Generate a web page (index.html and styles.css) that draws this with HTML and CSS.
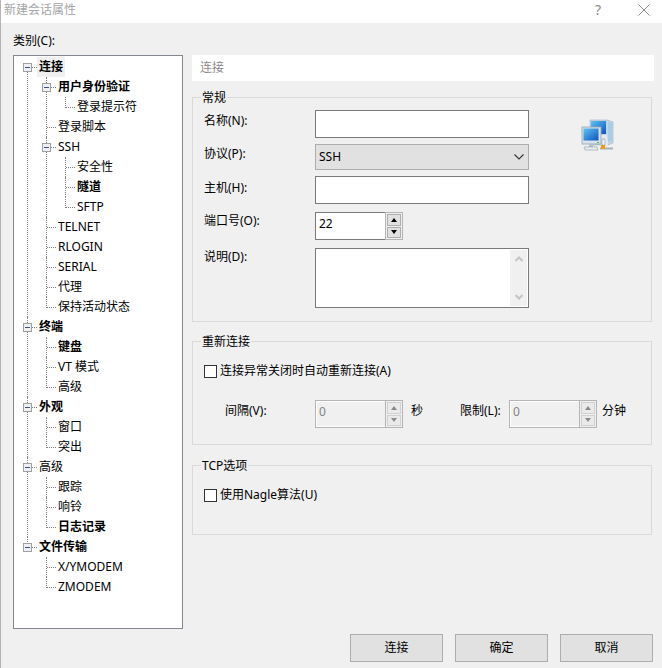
FILE: index.html
```html
<!DOCTYPE html>
<html>
  <head>
    <meta charset="UTF-8" />
    <title>新建会话属性</title>
    <link rel="stylesheet" href="styles.css">
  </head>
  <body>
    <div class="titlebar">
      <span class="title">新建会话属性</span>
      <span class="help">?</span>
      <svg class="close" width="12" height="12" viewBox="0 0 12 12"><path d="M.5.5l11 11M11.500.5l-11 11" stroke="#8a8a8a" fill="none"/></svg>
    </div>

    <div class="main">
      <div class="left">
        <div class="cat-label">类别(C):</div>
        <div class="tree">
          <ul>
            <li class="open"><i class="box"></i><span class="node bold selected">连接</span>
              <ul>
                <li class="open"><i class="box"></i><span class="node bold">用户身份验证</span>
                  <ul><li><span class="node">登录提示符</span></li></ul>
                </li>
                <li><span class="node">登录脚本</span></li>
                <li class="open"><i class="box"></i><span class="node">SSH</span>
                  <ul>
                    <li><span class="node">安全性</span></li>
                    <li><span class="node bold">隧道</span></li>
                    <li><span class="node">SFTP</span></li>
                  </ul>
                </li>
                <li><span class="node">TELNET</span></li>
                <li><span class="node">RLOGIN</span></li>
                <li><span class="node">SERIAL</span></li>
                <li><span class="node">代理</span></li>
                <li><span class="node">保持活动状态</span></li>
              </ul>
            </li>
            <li class="open"><i class="box"></i><span class="node bold">终端</span>
              <ul>
                <li><span class="node bold">键盘</span></li>
                <li><span class="node">VT 模式</span></li>
                <li><span class="node">高级</span></li>
              </ul>
            </li>
            <li class="open"><i class="box"></i><span class="node bold">外观</span>
              <ul>
                <li><span class="node">窗口</span></li>
                <li><span class="node">突出</span></li>
              </ul>
            </li>
            <li class="open"><i class="box"></i><span class="node">高级</span>
              <ul>
                <li><span class="node">跟踪</span></li>
                <li><span class="node">响铃</span></li>
                <li><span class="node bold">日志记录</span></li>
              </ul>
            </li>
            <li class="open"><i class="box"></i><span class="node bold">文件传输</span>
              <ul>
                <li><span class="node">X/YMODEM</span></li>
                <li><span class="node">ZMODEM</span></li>
              </ul>
            </li>
          </ul>
        </div>
      </div>

      <div class="right">
        <div class="page-title">连接</div>

        <fieldset class="group general">
          <legend>常规</legend>
          <div class="form-grid">
            <label class="lbl down">名称(N):</label>
            <div class="field"></div>
            <svg class="pc-icon" width="34" height="36" viewBox="0 0 34 36">
              <defs>
                <linearGradient id="scr" x1="0" y1="0" x2="1" y2="1">
                  <stop offset="0" stop-color="#5cc4f2"/>
                  <stop offset="1" stop-color="#0f52c0"/>
                </linearGradient>
              </defs>
              <path d="M10 2h17l6 2v21l-5 2H10z" fill="#c4d4e2" stroke="#9fb2c4" stroke-width=".6"/>
              <rect x="11" y="3" width="15" height="13" fill="url(#scr)"/>
              <path d="M28 4l4 1v18l-4 1z" fill="#a8cdea"/>
              <path d="M27 17h-6v11h7z" fill="#e4ebf0"/>
              <rect x="2" y="9" width="19" height="17" fill="#d8e2ea" stroke="#92a4b4" stroke-width=".8"/>
              <rect x="3.500" y="10.500" width="15" height="12" fill="url(#scr)"/>
              <rect x="17" y="24" width="2" height="1" fill="#4cc040"/>
              <path d="M9 26h4v3H9z" fill="#b4c0ca"/>
              <path d="M4 29h13l1 3H5z" fill="#e8edf1" stroke="#9aa8b4" stroke-width=".7"/>
              <path d="M20 30.500h13" stroke="#a3b3bf" stroke-width="2"/>
              <path d="M22 21h3v6h-3z" fill="#eef2f5" stroke="#8a98a4" stroke-width=".6"/>
              <rect x="21" y="27" width="4" height="4" fill="#f09a10"/>
            </svg>

            <label class="lbl">协议(P):</label>
            <div class="combo">SSH
              <svg width="10" height="6" viewBox="0 0 10 6"><path d="M.5.500L5 5 9.500.500" fill="none" stroke="#333" stroke-width="1.100"/></svg>
            </div>

            <label class="lbl down2">主机(H):</label>
            <div class="field"></div>

            <label class="lbl up">端口号(O):</label>
            <div class="spin port">
              <div class="spin-text">22</div>
              <div class="spin-btns">
                <span class="spin-btn"><b class="arrow-up"></b></span>
                <span class="spin-btn"><b class="arrow-down"></b></span>
              </div>
            </div>

            <label class="lbl up">说明(D):</label>
            <div class="field memo">
              <div class="memo-bar">
                <svg width="8" height="6" viewBox="0 0 8 6"><path d="M.5 5L4 1.500 7.500 5" fill="none" stroke="#c4c4c4" stroke-width="2"/></svg>
                <svg width="8" height="6" viewBox="0 0 8 6"><path d="M.5 1L4 4.500 7.500 1" fill="none" stroke="#c4c4c4" stroke-width="2"/></svg>
              </div>
            </div>
          </div>
        </fieldset>

        <fieldset class="group reconnect">
          <legend>重新连接</legend>
          <div class="check-row"><i class="check"></i>连接异常关闭时自动重新连接(A)</div>
          <div class="interval-row">
            <span class="int-label">间隔(V):</span>
            <div class="spin disabled">
              <div class="spin-text">0</div>
              <div class="spin-btns">
                <span class="spin-btn"><b class="arrow-up"></b></span>
                <span class="spin-btn"><b class="arrow-down"></b></span>
              </div>
            </div>
            <span class="unit sec">秒</span>
            <span class="limit-label">限制(L):</span>
            <div class="spin disabled">
              <div class="spin-text">0</div>
              <div class="spin-btns">
                <span class="spin-btn"><b class="arrow-up"></b></span>
                <span class="spin-btn"><b class="arrow-down"></b></span>
              </div>
            </div>
            <span class="unit min">分钟</span>
          </div>
        </fieldset>

        <fieldset class="group tcp">
          <legend>TCP选项</legend>
          <div class="check-row"><i class="check"></i>使用Nagle算法(U)</div>
        </fieldset>
      </div>
    </div>

    <div class="buttons">
      <button type="button">连接</button>
      <button type="button">确定</button>
      <button type="button">取消</button>
    </div>
  </body>
</html>
```

FILE: styles.css
```css
* {
  box-sizing: border-box;
}

html, body {
  margin: 0;
  height: 100%;
}

body {
  display: flex;
  flex-direction: column;
  width: 662px;
  height: 668px;
  overflow: hidden;
  background-color: #f0f0f0;
  color: #000;
  font-family: "Noto Sans", "Noto Sans CJK SC", sans-serif;
  font-size: 12px;
  line-height: 20px;
  border-left: 1px solid #b4b4b4;
}

.titlebar {
  flex: none;
  height: 23px;
  background-color: #fff;
  display: flex;
  align-items: center;
  padding: 0 0 3px 3px;
}

.title {
  color: #a6a6a6;
  flex: 1;
}

.help {
  color: #8a8a8a;
  font-size: 14px;
  margin-right: 37px;
}

.close {
  margin-right: 12px;
}

.main {
  display: flex;
  gap: 9px;
  padding: 8px 0 0 12px;
}

.left {
  width: 170px;
}

.cat-label {
  margin-bottom: 4px;
}

.tree {
  height: 574px;
  background-color: #fff;
  border: 1px solid #828790;
  padding: 1px 0 0 13px;
}

.tree ul {
  list-style: none;
  margin: 0;
  padding: 0;
}

.tree li ul {
  padding-left: 19px;
}

.tree li {
  position: relative;
}

.tree li::before {
  content: "";
  position: absolute;
  left: 0;
  top: 0;
  bottom: 0;
  border-left: 1px dotted #808080;
}

.tree li:last-child::before {
  bottom: auto;
  height: 11px;
}

.tree > ul > li:first-child::before {
  top: 10px;
}

.tree li::after {
  content: "";
  position: absolute;
  left: 1px;
  top: 10px;
  width: 9px;
  border-top: 1px dotted #808080;
}

.box {
  position: absolute;
  z-index: 1;
  left: -4px;
  top: 6px;
  width: 9px;
  height: 9px;
  background-color: #eef0f4;
  border: 1px solid #a0a0a0;
}

.box::after {
  content: "";
  position: absolute;
  left: 1px;
  top: 3px;
  width: 5px;
  height: 1px;
  background-color: #3d4f86;
}

.node {
  display: inline-block;
  height: 20px;
  margin-left: 10px;
  padding: 0 2px;
  vertical-align: top;
  color: #000;
}

.bold {
  font-weight: 700;
}

.selected {
  background-color: #f0f0f0;
}

.right {
  width: 462px;
  padding-top: 24px;
}

.page-title {
  height: 26px;
  line-height: 25px;
  background-color: #fff;
  color: #8c8c8c;
  padding-left: 8px;
  margin-bottom: 7px;
}

.group {
  width: 460px;
  margin: 0;
  min-width: 0;
  border: 1px solid #d9d9d9;
  padding: 0 0 0 11px;
}

.group legend {
  margin-left: -3px;
  padding: 2px 1px 0;
  line-height: 16px;
}

.general {
  padding-top: 4px;
  padding-bottom: 13px;
}

.reconnect {
  margin-top: 10px;
  padding-top: 11px;
  padding-bottom: 16px;
}

.tcp {
  margin-top: 11px;
  padding-top: 11px;
  padding-bottom: 29px;
}

.form-grid {
  display: grid;
  grid-template-columns: 111px 214px 1fr;
  grid-template-rows: 34px 32px 36px 36px 60px;
  align-items: start;
}

.lbl {
  grid-column: 1;
}

.lbl.down {
  margin-top: 1px;
}

.lbl.down2 {
  margin-top: 2px;
}

.lbl.up {
  margin-top: -1px;
}

.field {
  height: 28px;
  background-color: #fff;
  border: 1px solid #7a7a7a;
}

.pc-icon {
  grid-column: 3;
  grid-row: 1 / 3;
  margin: 8px 0 0 51px;
}

.combo {
  grid-column: 2;
  height: 26px;
  background-color: #e1e1e1;
  border: 1px solid #adadad;
  padding-left: 3px;
  line-height: 24px;
  display: flex;
  align-items: center;
  justify-content: space-between;
  padding-right: 4px;
}

.form-grid .field,
.form-grid .spin {
  grid-column: 2;
}

.memo {
  height: 60px;
  display: flex;
  justify-content: flex-end;
  padding: 1px;
}

.memo-bar {
  width: 17px;
  background-color: #f0f0f0;
  display: flex;
  flex-direction: column;
  justify-content: space-between;
  align-items: center;
  padding: 6px 0 6px;
}

.spin {
  display: flex;
  width: 88px;
  height: 28px;
}

.spin-text {
  flex: 1;
  background-color: #fff;
  border: 1px solid #7a7a7a;
  border-right: none;
  padding-left: 3px;
  line-height: 22px;
}

.spin-btns {
  width: 18px;
  border: 1px solid #b4b4b4;
  background-color: #f0f0f0;
  display: flex;
  flex-direction: column;
  gap: 1px;
  padding: 1px;
}

.spin-btn {
  flex: 1;
  background-color: #e1e1e1;
  border: 1px solid #adadad;
  display: flex;
  align-items: center;
  justify-content: center;
}

.arrow-up,
.arrow-down {
  width: 0;
  height: 0;
  border-left: 3.500px solid transparent;
  border-right: 3.500px solid transparent;
}

.arrow-up {
  border-bottom: 4px solid #000;
}

.arrow-down {
  border-top: 4px solid #000;
}

.spin.disabled .spin-text {
  background-color: #f0f0f0;
  border: 1px solid #b4b4b4;
  border-right: none;
  box-shadow: inset 1px 1px 0 #fff, inset 0 -1px 0 #fff;
  color: #838383;
}

.spin.disabled .spin-btn {
  background-color: #eaeaea;
  border-color: #d0d0d0;
}

.spin.disabled .arrow-up {
  border-bottom-color: #8a8a8a;
}

.spin.disabled .arrow-down {
  border-top-color: #8a8a8a;
}

.check-row {
  display: flex;
  align-items: center;
  gap: 3px;
}

.check {
  width: 13px;
  height: 13px;
  background-color: #fff;
  border: 1px solid #333;
}

.interval-row {
  display: flex;
  align-items: flex-start;
  margin-top: 19px;
}

.interval-row > span {
  padding-top: 1px;
}

.int-label {
  width: 111px;
  padding-left: 21px;
}

.unit {
  margin-left: 8px;
}

.sec {
  width: 49px;
}

.min {
  margin-left: 5px;
}

.limit-label {
  width: 49px;
}

.buttons {
  flex: 1;
  display: flex;
  justify-content: flex-end;
  align-items: flex-start;
  gap: 12px;
  padding-right: 9px;
  margin-top: 5px;
}

.buttons button {
  width: 93px;
  height: 28px;
  background-color: #e1e1e1;
  border: 1px solid #adadad;
  font-family: inherit;
  font-size: 12px;
  padding: 0 0 2px;
}
```
